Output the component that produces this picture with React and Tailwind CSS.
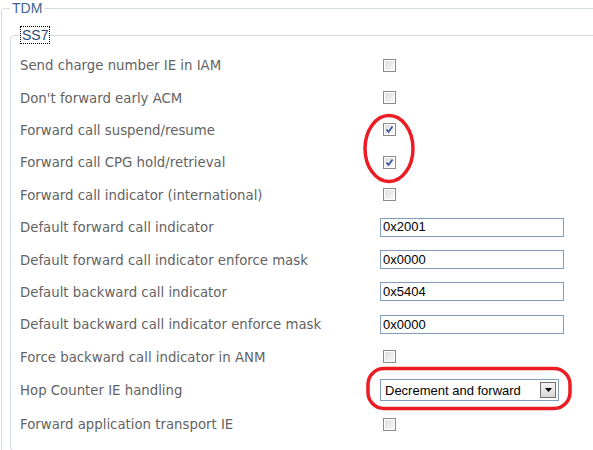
import React from 'react';

const rows = [
  { label: 'Send charge number IE in IAM', type: 'check' },
  { label: "Don't forward early ACM", type: 'check' },
  { label: 'Forward call suspend/resume', type: 'check', checked: true },
  { label: 'Forward call CPG hold/retrieval', type: 'check', checked: true },
  { label: 'Forward call indicator (international)', type: 'check' },
  { label: 'Default forward call indicator', type: 'text', value: '0x2001' },
  { label: 'Default forward call indicator enforce mask', type: 'text', value: '0x0000' },
  { label: 'Default backward call indicator', type: 'text', value: '0x5404' },
  { label: 'Default backward call indicator enforce mask', type: 'text', value: '0x0000' },
  { label: 'Force backward call indicator in ANM', type: 'check' },
  { label: 'Hop Counter IE handling', type: 'select', value: 'Decrement and forward' },
  { label: 'Forward application transport IE', type: 'check' },
];

const Checkbox = ({ checked }) => (
  <span className="ml-[3px] flex h-[13px] w-[13px] items-center justify-center border border-[#8a8a8a] bg-gradient-to-br from-[#dcdcdc] to-[#fbfbfb] shadow-[inset_0_0_0_1px_#ffffff]">
    {checked && (
      <svg width="9" height="9" viewBox="0 0 9 9">
        <path d="M1.5 4.5 L3.5 7 L7.5 1.5" fill="none" stroke="#2f4f9e" strokeWidth="1.6" />
      </svg>
    )}
  </span>
);

const Field = ({ row }) => {
  if (row.type === 'check') return <Checkbox checked={row.checked} />;
  if (row.type === 'text')
    return (
      <div className="flex h-[19px] w-[184px] items-center border border-[#7f9db9] bg-white px-[2px] text-[13px] text-black">
        {row.value}
      </div>
    );
  return (
    <div className="flex h-[22px] w-[179px] items-center justify-between border border-[#7f9db9] bg-white pl-[4px] pr-[2px] text-[13px] text-black">
      <span>{row.value}</span>
      <span className="flex h-[16px] w-[16px] items-center justify-center border border-[#707070] bg-gradient-to-b from-[#f4f4f4] to-[#d8d8d8]">
        <svg width="7" height="4" viewBox="0 0 7 4">
          <path d="M0 0 H7 L3.5 4 Z" fill="#000" />
        </svg>
      </span>
    </div>
  );
};

export default function App() {
  return (
    <div className="relative h-[450px] w-[593px] overflow-hidden bg-white font-['Liberation_Sans',Arial,sans-serif]">
      <fieldset className="ml-[1px] h-[500px] w-[640px] rounded-[3px] border border-[#d3dbe3]">
        <legend className="ml-[8px] px-[2px] text-[14px] leading-[16px] text-[#3d6590]">TDM</legend>
        <fieldset className="ml-[8px] mt-[11px] w-[640px] rounded-[4px] border border-[#d3dbe3] pb-[10px]">
          <legend className="ml-[9px] px-[1px] text-[14px] leading-[16px]">
            <span className="outline-1 outline-dotted outline-black text-[#2b4a7a] px-[1px]">SS7</span>
          </legend>
          <div className="mt-[6px]">
            {rows.map((row, i) => (
              <div
                key={i}
                className={`flex items-center ${row.type === 'select' ? 'h-[35px]' : 'h-[32.4px]'}`}
              >
                <div className="w-[369px] pl-[9px] pt-[2px] font-['DejaVu_Sans',sans-serif] text-[13.3px] text-[#636363]">
                  {row.label}
                </div>
                <Field row={row} />
              </div>
            ))}
          </div>
        </fieldset>
      </fieldset>

      {/* red annotations */}
      <svg className="pointer-events-none absolute left-0 top-0" width="593" height="450">
        <ellipse cx="389" cy="148.5" rx="24" ry="33" fill="none" stroke="#ec1c24" strokeWidth="3.5" />
        <rect x="368" y="368.5" width="202" height="40" rx="16" fill="none" stroke="#ec1c24" strokeWidth="3.5" />
      </svg>
    </div>
  );
}
